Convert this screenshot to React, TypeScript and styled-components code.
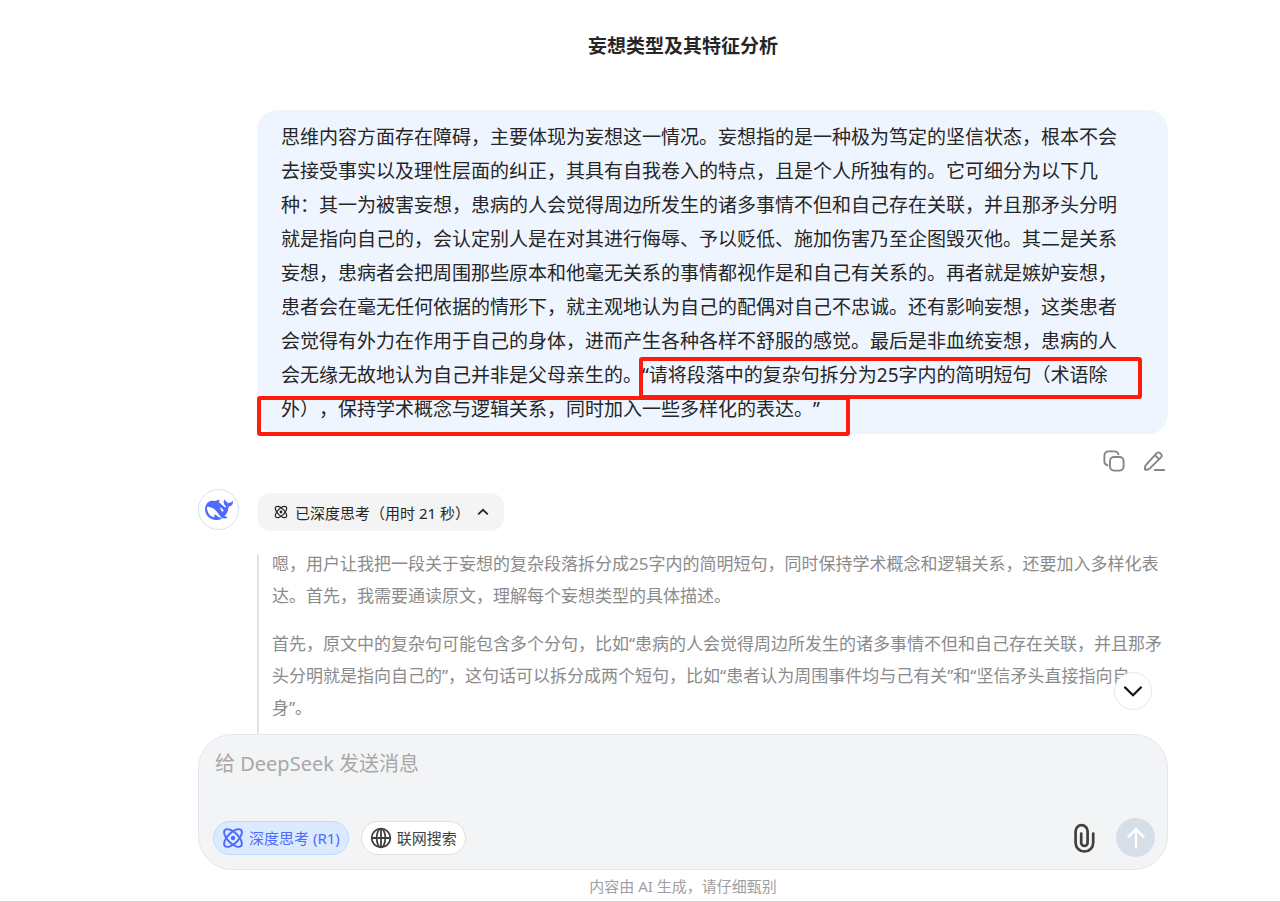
import React from "react";
import styled, { createGlobalStyle } from "styled-components";

const GlobalStyle = createGlobalStyle`
  *, *::before, *::after { box-sizing: border-box; }
  body {
    margin: 0;
    background: #fff;
    color: #262626;
    font-family: "Noto Sans", "Noto Sans CJK SC", sans-serif;
    text-spacing-trim: space-all;
  }
  button, textarea { font: inherit; }
`;

const Page = styled.div`
  min-height: 100vh;
  display: flex;
  flex-direction: column;
  align-items: center;
  padding-left: 86px;
  border-bottom: 1px solid #d4d4d4;
`;

const Header = styled.header`
  padding: 31px 16px 49px;
`;

const Title = styled.h1`
  margin: 0;
  font-size: 19px;
  line-height: 30px;
  font-weight: 700;
`;

const Column = styled.main`
  width: 100%;
  max-width: 970px;
  flex: 1;
  display: flex;
  flex-direction: column;
`;

const UserTurn = styled.section`
  margin-left: 59px;
  display: flex;
  flex-direction: column;
`;

const Bubble = styled.div`
  position: relative;
  padding: 10px 24px 8px;
  border-radius: 20px;
  background: #eff5ff;
  font-size: 19px;
  line-height: 34px;
  white-space: nowrap;
`;

const Mark = styled.span<{ $left: number; $top: number; $width: number; $height: number }>`
  position: absolute;
  left: ${(p) => p.$left}px;
  top: ${(p) => p.$top}px;
  width: ${(p) => p.$width}px;
  height: ${(p) => p.$height}px;
  border: 4px solid #ff1c0c;
  border-radius: 3px;
  pointer-events: none;
`;

const Actions = styled.div`
  display: flex;
  justify-content: flex-end;
  gap: 16px;
  padding: 15px 2px 20px 0;
`;

const IconButton = styled.button<{ $dark?: boolean }>`
  display: flex;
  align-items: center;
  justify-content: center;
  padding: 0;
  border: 0;
  background: none;
  color: ${(p) => (p.$dark ? "#404040" : "#858585")};
`;

const AssistantTurn = styled.section`
  flex: 1;
  display: flex;
  gap: 18px;
`;

const Avatar = styled.div`
  flex: none;
  width: 41px;
  height: 41px;
  margin-top: -4px;
  display: flex;
  align-items: center;
  justify-content: center;
  border: 1px solid #d0e0ff;
  border-radius: 50%;
  color: #4d6bfe;
`;

const Answer = styled.div`
  flex: 1;
  display: flex;
  flex-direction: column;
  align-items: flex-start;
`;

const ThinkToggle = styled.button`
  height: 38px;
  display: flex;
  align-items: center;
  padding: 0 15px 0 17px;
  border: 0;
  border-radius: 14px;
  background: #f4f4f4;
  color: #262626;
  font-size: 15px;
  gap: 7px;
`;

const Thoughts = styled.div`
  flex: 1;
  margin-top: 23px;
  padding-left: 13px;
  border-left: 2px solid #e3e3e3;
  color: #8b8b8b;
  font-size: 17px;
  line-height: 32px;
  white-space: nowrap;

  p { margin: -6px 0 22px; }
  p:last-child { margin-bottom: 0; }
`;

const Dock = styled.footer`
  position: relative;
  width: 100%;
  max-width: 970px;
`;

const ScrollDown = styled.button`
  position: absolute;
  right: 16px;
  top: -62px;
  width: 38px;
  height: 38px;
  padding: 0;
  display: flex;
  align-items: center;
  justify-content: center;
  border: 1px solid #e8e8e8;
  border-radius: 50%;
  background: #fff;
  color: #171717;
`;

const Composer = styled.form`
  display: flex;
  flex-direction: column;
  padding: 14px 12px 12px 14px;
  border: 1px solid #e3e7ee;
  border-radius: 34px;
  background: #f3f4f6;
`;

const Prompt = styled.textarea`
  display: block;
  width: 100%;
  height: 69px;
  padding: 0 2px;
  border: 0;
  outline: 0;
  resize: none;
  background: none;
  font-size: 20px;
  line-height: 30px;

  &::placeholder { color: #a8a8a8; opacity: 1; }
`;

const Tools = styled.div`
  display: flex;
  align-items: center;
  gap: 12px;
`;

const Chip = styled.button<{ $active?: boolean }>`
  height: 34px;
  display: flex;
  align-items: center;
  gap: 5px;
  padding: 0 8px;
  border: 1px solid ${(p) => (p.$active ? "#bcdcff" : "#e0e0e0")};
  border-radius: 17px;
  background: ${(p) => (p.$active ? "#dbeafe" : "#fff")};
  color: ${(p) => (p.$active ? "#4d6bfe" : "#404040")};
  font-size: 15px;
`;

const Spacer = styled.div`
  flex: 1;
`;

const Send = styled.button`
  width: 39px;
  height: 39px;
  margin-left: 8px;
  padding: 0;
  display: flex;
  align-items: center;
  justify-content: center;
  border: 0;
  border-radius: 50%;
  background: #d6dee8;
  color: #fff;
`;

const Notice = styled.p`
  margin: 0;
  padding: 5px 0 4px;
  text-align: center;
  color: #a0a0a0;
  font-size: 15px;
  line-height: 22px;
`;

const Atom = ({ size }: { size: number }) => (
  <svg width={size} height={size} viewBox="0 0 24 24" fill="none" stroke="currentColor" strokeWidth="2.1" aria-hidden="true">
    <ellipse cx="12" cy="12" rx="12.4" ry="5.8" transform="rotate(45 12 12)" />
    <ellipse cx="12" cy="12" rx="12.4" ry="5.8" transform="rotate(-45 12 12)" />
    <circle cx="12" cy="12" r="2.4" fill="currentColor" stroke="none" />
  </svg>
);

const Whale = () => (
  <svg width="28" height="28" viewBox="0 0 24 24" fill="currentColor" aria-hidden="true">
    <path d="M23.748 4.482c-.254-.124-.364.113-.512.234-.051.039-.094.09-.137.136-.372.397-.806.657-1.373.626-.829-.046-1.537.214-2.163.848-.133-.782-.575-1.248-1.247-1.548-.352-.156-.708-.311-.955-.65-.172-.241-.219-.51-.305-.774-.055-.16-.11-.323-.293-.35-.2-.031-.278.136-.356.276-.313.572-.434 1.202-.422 1.84.027 1.436.633 2.58 1.838 3.393.137.093.172.187.129.323-.082.28-.18.552-.266.833-.055.179-.137.217-.329.14a5.526 5.526 0 01-1.736-1.18c-.857-.828-1.631-1.742-2.597-2.458a11.365 11.365 0 00-.689-.471c-.985-.957.13-1.743.388-1.836.27-.098.093-.432-.779-.428-.872.004-1.67.295-2.687.684a3.055 3.055 0 01-.465.137 9.597 9.597 0 00-2.883-.102c-1.885.21-3.39 1.102-4.497 2.623C.082 8.606-.231 10.684.152 12.85c.403 2.284 1.569 4.175 3.36 5.653 1.858 1.533 3.997 2.284 6.438 2.14 1.482-.085 3.133-.284 4.994-1.86.47.234.962.327 1.78.397.63.059 1.236-.03 1.705-.128.735-.156.684-.837.419-.961-2.155-1.004-1.682-.595-2.113-.926 1.096-1.296 2.746-2.642 3.392-7.003.05-.347.007-.565 0-.845-.004-.17.035-.237.23-.256a4.173 4.173 0 001.545-.475c1.396-.763 1.96-2.015 2.093-3.517.02-.23-.004-.467-.247-.588zM11.581 18c-2.089-1.642-3.102-2.183-3.52-2.16-.392.024-.321.471-.235.763.09.288.207.486.371.739.114.167.192.416-.113.603-.673.416-1.842-.14-1.897-.167-1.361-.802-2.5-1.86-3.301-3.307-.774-1.393-1.224-2.887-1.298-4.482-.02-.386.093-.522.477-.592a4.696 4.696 0 011.529-.039c2.132.312 3.946 1.265 5.468 2.774.868.86 1.525 1.887 2.202 2.891.72 1.066 1.494 2.082 2.48 2.914.348.292.625.514.891.677-.802.09-2.14.11-3.054-.614zm1-6.44a.306.306 0 01.415-.287.302.302 0 01.2.288.306.306 0 01-.31.307.303.303 0 01-.304-.308zm3.11 1.596c-.2.081-.399.151-.59.16a1.245 1.245 0 01-.798-.254c-.274-.23-.47-.358-.552-.758a1.73 1.73 0 01.016-.588c.07-.327-.008-.537-.239-.727-.187-.156-.426-.199-.688-.199a.559.559 0 01-.254-.078c-.11-.054-.2-.19-.114-.358.028-.054.16-.186.192-.21.356-.202.767-.136 1.146.016.352.144.618.408 1.001.782.391.451.462.576.685.914.176.265.336.537.445.848.067.195-.019.354-.25.452z" />
  </svg>
);

const CopyIcon = () => (
  <svg width="24" height="24" viewBox="0 0 24 24" fill="none" stroke="currentColor" strokeWidth="1.9" aria-hidden="true">
    <rect x="8" y="8" width="13.6" height="13.6" rx="4" />
    <path d="M5.4 16.2A3.8 3.8 0 0 1 2.4 12.5V6.4a4 4 0 0 1 4-4h6.2a3.9 3.9 0 0 1 3.8 3" strokeLinecap="round" />
  </svg>
);

const EditIcon = () => (
  <svg width="24" height="24" viewBox="0 0 24 24" fill="none" stroke="currentColor" strokeWidth="1.9" strokeLinecap="round" strokeLinejoin="round" aria-hidden="true">
    <path d="M15 3.9a1.9 1.9 0 0 1 2.7 0l1.5 1.5a1.9 1.9 0 0 1 0 2.7L7.4 19.9a2 2 0 0 1-1.2.6l-2.5.3a.7.7 0 0 1-.8-.8l.3-2.7a2 2 0 0 1 .6-1.2z" />
    <path d="M13 6.2l3.9 3.9M12.8 21h9.4" />
  </svg>
);

const Globe = () => (
  <svg width="22" height="22" viewBox="0 0 22 22" fill="none" stroke="currentColor" strokeWidth="1.8" aria-hidden="true">
    <circle cx="11" cy="11" r="9.3" />
    <ellipse cx="11" cy="11" rx="4.3" ry="9.3" />
    <path d="M1.7 11h18.6M11 1.7v18.6" />
  </svg>
);

const Clip = () => (
  <svg width="24" height="30" viewBox="0 0 24 30" fill="none" stroke="currentColor" strokeWidth="2.7" strokeLinecap="round" aria-hidden="true">
    <path d="M21.2 10.5v9.2a8.6 8.6 0 0 1-17.6 0V8.2a6 6 0 0 1 12 0v11.5a3.2 3.2 0 0 1-6.4 0V10.5" />
  </svg>
);

export default function App() {
  return (
    <>
      <GlobalStyle />
      <Page lang="zh-CN">
        <Header>
          <Title>妄想类型及其特征分析</Title>
        </Header>
        <Column>
          <UserTurn>
            <Bubble>
              思维内容方面存在障碍，主要体现为妄想这一情况。妄想指的是一种极为笃定的坚信状态，根本不会
              <br />
              去接受事实以及理性层面的纠正，其具有自我卷入的特点，且是个人所独有的。它可细分为以下几
              <br />
              种：其一为被害妄想，患病的人会觉得周边所发生的诸多事情不但和自己存在关联，并且那矛头分明
              <br />
              就是指向自己的，会认定别人是在对其进行侮辱、予以贬低、施加伤害乃至企图毁灭他。其二是关系
              <br />
              妄想，患病者会把周围那些原本和他毫无关系的事情都视作是和自己有关系的。再者就是嫉妒妄想，
              <br />
              患者会在毫无任何依据的情形下，就主观地认为自己的配偶对自己不忠诚。还有影响妄想，这类患者
              <br />
              会觉得有外力在作用于自己的身体，进而产生各种各样不舒服的感觉。最后是非血统妄想，患病的人
              <br />
              会无缘无故地认为自己并非是父母亲生的。“请将段落中的复杂句拆分为25字内的简明短句（术语除
              <br />
              外），保持学术概念与逻辑关系，同时加入一些多样化的表达。”
              <Mark $left={382} $top={247} $width={503} $height={42} />
              <Mark $left={0} $top={286} $width={593} $height={40} />
            </Bubble>
            <Actions>
              <IconButton type="button" aria-label="复制"><CopyIcon /></IconButton>
              <IconButton type="button" aria-label="编辑"><EditIcon /></IconButton>
            </Actions>
          </UserTurn>
          <AssistantTurn>
            <Avatar><Whale /></Avatar>
            <Answer>
              <ThinkToggle type="button" aria-expanded="true">
                <Atom size={14} />
                <span>已深度思考（用时 21 秒）</span>
                <svg width="12" height="12" viewBox="0 0 12 12" fill="none" stroke="currentColor" strokeWidth="1.8" aria-hidden="true">
                  <path d="M1.2 8.4L6 3.8l4.8 4.6" />
                </svg>
              </ThinkToggle>
              <Thoughts>
                <p>
                  嗯，用户让我把一段关于妄想的复杂段落拆分成25字内的简明短句，同时保持学术概念和逻辑关系，还要加入多样化表
                  <br />
                  达。首先，我需要通读原文，理解每个妄想类型的具体描述。
                </p>
                <p>
                  首先，原文中的复杂句可能包含多个分句，比如“患病的人会觉得周边所发生的诸多事情不但和自己存在关联，并且那矛
                  <br />
                  头分明就是指向自己的”，这句话可以拆分成两个短句，比如“患者认为周围事件均与己有关”和“坚信矛头直接指向自
                  <br />
                  身”。
                </p>
              </Thoughts>
            </Answer>
          </AssistantTurn>
        </Column>
        <Dock>
          <ScrollDown type="button" aria-label="滚动到底部">
            <svg width="20" height="20" viewBox="0 0 20 20" fill="none" stroke="currentColor" strokeWidth="2.2" strokeLinecap="round" aria-hidden="true">
              <path d="M2 6.4l8 7.8 8-7.8" />
            </svg>
          </ScrollDown>
          <Composer onSubmit={(e) => e.preventDefault()}>
            <Prompt aria-label="消息" placeholder="给 DeepSeek 发送消息" />
            <Tools>
              <Chip type="button" $active aria-pressed="true">
                <Atom size={22} />
                深度思考 (R1)
              </Chip>
              <Chip type="button" aria-pressed="false">
                <Globe />
                联网搜索
              </Chip>
              <Spacer />
              <IconButton type="button" $dark aria-label="上传附件"><Clip /></IconButton>
              <Send type="submit" aria-label="发送">
                <svg width="22" height="22" viewBox="0 0 22 22" fill="none" stroke="currentColor" strokeWidth="2.4" strokeLinecap="round" strokeLinejoin="round" aria-hidden="true">
                  <path d="M11 20V2.6M3.4 9.8L11 2.2l7.6 7.6" />
                </svg>
              </Send>
            </Tools>
          </Composer>
          <Notice>内容由 AI 生成，请仔细甄别</Notice>
        </Dock>
      </Page>
    </>
  );
}
